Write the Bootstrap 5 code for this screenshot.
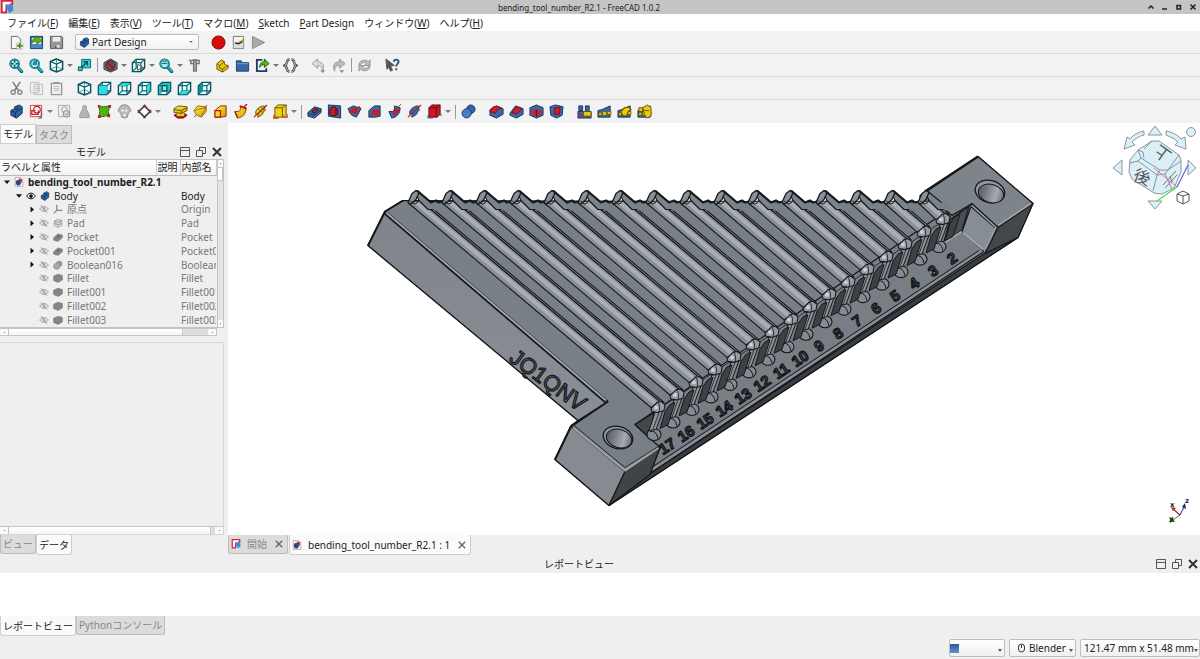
<!DOCTYPE html>
<html lang="ja">
<head>
<meta charset="utf-8">
<meta name="viewport" content="width=device-width, initial-scale=1">
<title>bending_tool_number_R2.1 - FreeCAD 1.0.2</title>
<link href="https://cdn.jsdelivr.net/npm/bootstrap@5.3.0/dist/css/bootstrap.min.css" rel="stylesheet">
<style>
body{font-family:"Noto Sans","Noto Sans CJK JP",sans-serif;font-size:10px;line-height:14px;color:#222;background:#efefef}
button,select{font:inherit;color:inherit;padding:0;border:0;background:none}
.titlebar{background:#c5c5c5;height:14px;font-size:8px;line-height:13px}
.titlebar .brand{width:14px;height:14px}
.wctl{width:14px;height:14px;line-height:0}
.menubar{background:#fff;height:17px;padding-left:7px}
.menubar a{color:#222;text-decoration:none;line-height:19px;margin-right:10px;white-space:nowrap}
.tools{height:23px;border-bottom:1px solid #dadada;background:#f2f2f2}
.tools.last{border:0}
.tb{width:20px;height:20px;display:flex;align-items:center;justify-content:center;flex:none}
.tb svg{width:15px;height:15px}
.tb.more{width:28px;justify-content:flex-start;padding-left:3px}
.tb.more::after,.drop::after{content:"";border:3px solid transparent;border-top-color:#777;border-bottom:0;margin-left:3px}
.grip{width:8px;height:16px;flex:none;background:radial-gradient(circle,#c4c4c4 30%,transparent 40%) 3px 0/2px 2px repeat-y,radial-gradient(circle,#c4c4c4 30%,transparent 40%) 5px 0/2px 2px repeat-y}
.grip.edge{width:6px}
.rule{width:6px;height:14px;flex:none;background:linear-gradient(#999,#999) 3px 0/1px 100% no-repeat}
.bench{width:124px;height:16px;border:1px solid #bbb;border-radius:2px;background:linear-gradient(#fff,#f1f1f1);margin:0 1px}
.bench svg{width:11px;height:11px;margin:0 2px 0 3px}
.pick{appearance:none;flex:1;height:14px;line-height:14px;outline:0}
.drop::after{margin:0 5px 0 0;border-width:2px;border-bottom:0}
.side{width:224px;margin-right:4px}
.sidetabs{padding-top:1px}
.tabbtn{border:1px solid #bcbcbc;background:#dcdcdc;color:#888;height:19px;padding:0 2px;white-space:nowrap}
.tabbtn.on{background:#fafafa;color:#222;height:20px;border-color:#cfcfcf}
.down .tabbtn{border-top:0;border-radius:0 0 3px 3px}
.panelhead{height:15px}
.panelhead svg,.reporthead svg{width:10px;height:10px;display:block}
.panelhead button,.reporthead button{width:10px;margin-left:6px}
.panelhead button:last-child,.reporthead button:last-child{margin-right:2px}
.treebox{height:169px;border:1px solid #c2c2c2;border-left:0}
.treebox table{table-layout:fixed;width:216px;height:167px;margin:0}
.treebox th{height:15px;font-weight:400;background:linear-gradient(#fff,#f2f2f2);border-right:1px solid #ccc;border-bottom:1px solid #bbb;padding:0 0 0 1px;line-height:13px;overflow:hidden;white-space:nowrap}
.treebox td{padding:0 0 0 1px;line-height:13px;overflow:hidden;white-space:nowrap;color:#777}
.treebox tbody{border:0}
.treebox td svg{width:10px;height:10px;vertical-align:-1px;margin-right:4px}
.treebox .tri{display:inline-block;width:10px;height:10px;vertical-align:-1px;margin-right:2px}
.tri.open{background:#111;clip-path:polygon(20% 35%,80% 35%,50% 70%)}
.tri.shut{background:#111;clip-path:polygon(35% 20%,70% 50%,35% 80%)}
.treebox .lv0{padding-left:2px}.treebox .lv1{padding-left:14px}.treebox .lv2{padding-left:27px}
.treebox .live td{color:#222}
.vbar{width:8px;background:#e4e4e4;border-left:1px solid #c5c5c5}
.hbar{height:8px;background:#dedede;border:1px solid #c5c5c5;border-left:0;width:217px}
.cap{background:#fafafa;flex:none;display:flex;align-items:center;justify-content:center}
.cap::before{content:"";width:1px;height:1px;background:#777}
.vbar .cap{height:7px}.hbar .cap{width:8px}
.vbar .grab{height:14px;background:#fff;border:1px solid #c5c5c5;border-left:0}
.hbar .grab{background:linear-gradient(#fff,#f5f5f5);border:solid #c5c5c5;border-width:0 1px}
.hbar .long{width:81%}
.props{border:1px solid #d6d6d6;border-left:0;margin-top:6px}
.props .hbar{width:auto;border-right:0;border-bottom:0}
.stage{background:#fff}
.stage>svg.part{position:absolute;inset:0;width:100%;height:100%}
.navcube{position:absolute;top:0;right:0;width:90px;height:92px}
.triad{position:absolute;right:8px;bottom:10px;width:26px;height:28px}
.doctabs{gap:1px}
.doctabs svg{width:10px;height:10px}
.doctabs .tabbtn{padding:0 4px 0 2px}
.doctabs .tabbtn span{margin:0 8px 0 6px}
.doctabs .cross{width:8px;height:8px}
.reporthead{height:18px}
.report{height:43px;background:#fff}
.status{height:22px}
.status .box{height:18px;border:1px solid #bdbdbd;border-radius:2px;background:linear-gradient(#fff,#f0f0f0);display:flex;align-items:center;white-space:nowrap;flex:none}
.status .box::after{content:"";border:2px solid transparent;border-top:3px solid #555;border-bottom:0;margin:4px 2px 0 auto}
.w1{width:56px}.w2{width:67px}.w3{width:120px}
.status .w3{padding-left:3px}
.swatch{width:9px;height:9px;background:linear-gradient(#2f5b96,#5f90c8)}
.report-tabs{height:21px}
</style>
</head>
<body class="d-flex flex-column min-vh-100 overflow-hidden">

<svg width="0" height="0" class="position-absolute" aria-hidden="true">
<defs>
<linearGradient id="yl" x2="1" y2="1"><stop stop-color="#fff04a"/><stop offset="1" stop-color="#c9a100"/></linearGradient>
<symbol id="fc" viewBox="0 0 16 16"><path d="M2 1h12v4H7v9H2z" fill="#fff" stroke="#d8232f" stroke-width="2"/><path d="M7 6h3l1-1 1 1 2-1v3l1 1-1 2 1 1-2 1-1-1v2h-2v-3H8z" fill="#3e87e0" stroke="#3e87e0"/><path d="M5 4h6M5 4v8" stroke="#fff" stroke-width="2"/></symbol>
<symbol id="doc" viewBox="0 0 16 16"><path d="M2 1h9l3 3v11H2z" fill="#fff" stroke="#888"/><ellipse cx="7" cy="9" rx="4" ry="4.500" fill="#1d4a8c"/><path d="M8 2l5 2-1 6-4-3z" fill="#bb2530"/></symbol>
<symbol id="new" viewBox="0 0 16 16"><path d="M2.500 1.500h7l3 3v10h-10z" fill="#f8f8f8" stroke="#666"/><circle cx="11.500" cy="11.500" r="4" fill="#fff" stroke="#999" stroke-width=".6"/><path d="M11.500 8.500v6M8.500 11.500h6" stroke="#518a16" stroke-width="2"/></symbol>
<symbol id="open" viewBox="0 0 16 16"><path d="M1.500 1.500h13v13h-13z" fill="#3465a4" stroke="#1c3d6b"/><path d="M3 3h10v7H3z" fill="#eee"/><path d="M2 10h12v4H2z" fill="#4d86c6"/><path d="M3 9c0-5 3-6 5-6V1l6 5-6 4V7C6 7 4 7 3 9z" fill="#5cb312" stroke="#2d6d0a" stroke-width=".7"/></symbol>
<symbol id="save" viewBox="0 0 16 16"><path d="M1.500 1.500h12l1 1v12h-13z" fill="#999" stroke="#555"/><path d="M4 2h8v5H4z" fill="#eee"/><path d="M5 10h7v4H5z" fill="#ddd" stroke="#666" stroke-width=".6"/><path d="M6 11h2v3H6z" fill="#555"/></symbol>
<symbol id="rec" viewBox="0 0 16 16"><circle cx="8" cy="8" r="7" fill="#d40c0c" stroke="#900"/></symbol>
<symbol id="macro" viewBox="0 0 16 16"><path d="M2.500 1.500h11v13h-11z" fill="#f4f4f4" stroke="#777"/><path d="M3 8h10v6H3z" fill="#ddd"/><path d="M4 9c2-3 2 1 4-1l5-3-1 3-4 2z" fill="#222"/><path d="M8 8l5-3" stroke="#e5b800" stroke-width="1.500"/></symbol>
<symbol id="play" viewBox="0 0 16 16"><path d="M1.500 1.500v13l13-6.500z" fill="#aaa" stroke="#888"/></symbol>
<symbol id="lens" viewBox="0 0 16 16"><path d="M8.500 9l5 5.500" stroke="#075b66" stroke-width="3.400" stroke-linecap="round"/><path d="M9 9l4.500 5" stroke="#23c4cf" stroke-width="1.600" stroke-linecap="round"/><circle cx="6" cy="6" r="4.600" fill="#b9eef0" stroke="#075b66" stroke-width="2"/><circle cx="6" cy="6" r="4.600" fill="none" stroke="#1bb5be"/></symbol>
<symbol id="fit" viewBox="0 0 16 16"><use href="#lens"/><path d="M6 2v8M2 6h8" stroke="#075b66" stroke-width="1.600"/><path d="M5 5h2v2H5z" fill="#fff"/></symbol>
<symbol id="sel" viewBox="0 0 16 16"><use href="#lens"/><path d="M4 7l1-3 3-1v4z" fill="#149da5" stroke="#075b66" stroke-width=".7"/></symbol>
<symbol id="zoomto" viewBox="0 0 16 16"><use href="#lens"/><path d="M3 6h6M4 4h4" stroke="#075b66"/></symbol>
<symbol id="iso" viewBox="0 0 16 16"><path d="M8 1l6.500 2.800v8.500L8 15l-6.500-2.700V3.800z" fill="#fff" stroke="#0a515b" stroke-width="1.600"/><path d="M2 4l6 2.500L14 4M8 6.500v8" fill="none" stroke="#0a515b" stroke-width="1.400"/><path d="M2 12l6-3 6 3M8 1.500v4" fill="none" stroke="#17a5ae"/></symbol>
<symbol id="wire" viewBox="0 0 16 16"><path d="M1.500 5l4-3.500h9v9l-4 4h-9z" fill="#e9ffff" stroke="#0a515b" stroke-width="1.500"/><path d="M1.500 5h9v9.500M10.500 5l4-3.500M5.500 1.500v9h9M5.500 10.500l-4 4" fill="none" stroke="#0a6871" stroke-width="1.300"/></symbol>
<symbol id="front" viewBox="0 0 16 16"><use href="#wire"/><path d="M2 5h8.500v9H2z" fill="#2bdde5"/></symbol>
<symbol id="topv" viewBox="0 0 16 16"><use href="#wire"/><path d="M2 5l4-3h8l-4 3z" fill="#2bdde5"/></symbol>
<symbol id="right" viewBox="0 0 16 16"><use href="#wire"/><path d="M11 5l3-3v8l-3 4z" fill="#2bdde5"/></symbol>
<symbol id="rear" viewBox="0 0 16 16"><use href="#wire"/><path d="M5.500 5h5v5.500h-5z" fill="#8fe3e6"/><path d="M2 5h3v8l-3 1zM6 2h8l-3 3H6zM11 5l3-3v8h-3z" fill="#22c3cb"/><path d="M5.500 5h5v5.500h-5z" fill="none" stroke="#0a515b" stroke-width="1.300"/></symbol>
<symbol id="bottom" viewBox="0 0 16 16"><use href="#wire"/><path d="M2 14l4-4h8l-4 4z" fill="#2bdde5"/></symbol>
<symbol id="leftv" viewBox="0 0 16 16"><use href="#wire"/><path d="M2 5l4-3v8l-4 4z" fill="#139099"/></symbol>
<symbol id="linkgo" viewBox="0 0 16 16"><path d="M5 1.500h9.500v9H5z" fill="#32cfd7" stroke="#0a6871"/><path d="M1.500 9.500h4v4h-4z" fill="#32cfd7" stroke="#0a515b"/><path d="M5 10l6-6M7 4h4v4" stroke="#0a515b" stroke-width="1.500" fill="none"/></symbol>
<symbol id="style" viewBox="0 0 16 16"><path d="M8 1l7 4v7l-7 3-7-3V5z" fill="#55868b" stroke="#0c5058"/><circle cx="8" cy="8" r="4.700" fill="#555" stroke="#a31217" stroke-width="1.600"/><path d="M5 5l6 6" stroke="#a31217" stroke-width="1.700"/></symbol>
<symbol id="clip" viewBox="0 0 16 16"><use href="#wire"/><path d="M7 7l5 2-2 1 1 3-2-1-2 1z" fill="#fff" stroke="#444"/></symbol>
<symbol id="caliper" viewBox="0 0 16 16"><path d="M2 2.500h12M7 1v13h3V1M4 3v3h3M10 6h3V3" stroke="#777" stroke-width="1.400" fill="#aaa"/></symbol>
<symbol id="part" viewBox="0 0 16 16"><path d="M2 6l5-4 3 2v3l4 1v3l-6 4-6-3z" fill="#eac90c" stroke="#6d5800"/><path d="M2 6l3 2v3l3 1 6-4M8 12v3M5 8l5-4" fill="none" stroke="#6d5800"/></symbol>
<symbol id="folder" viewBox="0 0 16 16"><path d="M1.500 3h5l1 2h7v9h-13z" fill="#3568a8" stroke="#1d3e69"/><path d="M2 6h12" stroke="#72a0d3"/></symbol>
<symbol id="share" viewBox="0 0 16 16"><path d="M8 2H2v12h10v-3" fill="none" stroke="#1d3e69" stroke-width="2"/><path d="M5 10c0-5 3-6 5-6V1l5 5-5 4V7C8 7 6 8 5 10z" fill="#59b80d" stroke="#23610a"/></symbol>
<symbol id="braces" viewBox="0 0 16 16"><path d="M7 1.500C2.500 1.500 5.500 7 2 8c3.500 1 .5 6.500 5 6.500M9 1.500c4.500 0 1.500 5.500 5 6.500-3.500 1-.5 6.500-5 6.500" fill="none" stroke="#444" stroke-width="2.600"/><path d="M7 1.500C2.500 1.500 5.500 7 2 8c3.500 1 .5 6.500 5 6.500M9 1.500c4.500 0 1.500 5.500 5 6.500-3.500 1-.5 6.500-5 6.500" fill="none" stroke="#ddd" stroke-width=".8"/></symbol>
<symbol id="undo" viewBox="0 0 16 16"><path d="M1 6l6-5v3c6 0 8 5 5 10 0-4-1-6-5-6v3z" fill="#ddd" stroke="#999"/><path d="M10 13h5l-2.500 3z" fill="#888"/></symbol>
<symbol id="redo" viewBox="0 0 16 16"><path d="M15 6L9 1v3C3 4 1 9 4 14c0-4 1-6 5-6v3z" fill="#bbb" stroke="#999"/><path d="M9 13h5l-2.500 3z" fill="#888"/></symbol>
<symbol id="refresh" viewBox="0 0 16 16"><path d="M2 7c1-5 7-6 10-3l2-2v6H8l2-2C8 4 5 5 4 7zM14 9c-1 5-7 6-10 3l-2 2V8h6l-2 2c2 2 5 1 6-1z" fill="#bbb" stroke="#888" stroke-width=".8"/></symbol>
<symbol id="what" viewBox="0 0 16 16"><path d="M1 1l9 7-4 .5L8 13l-2 1-2-4-2 2z" fill="#555" stroke="#555"/><path d="M9.500 4c0-3 5-3 5 0 0 2-2.500 2-2.500 5M12 11v2" fill="none" stroke="#2c4d7c" stroke-width="2"/></symbol>
<symbol id="cut" viewBox="0 0 16 16"><path d="M4 1l6 9M12 1L6 10" stroke="#777" stroke-width="1.500"/><circle cx="4.500" cy="12" r="2.200" fill="none" stroke="#888" stroke-width="1.500"/><circle cx="11.500" cy="12" r="2.200" fill="none" stroke="#888" stroke-width="1.500"/></symbol>
<symbol id="copy" viewBox="0 0 16 16"><path d="M1.500 1.500h9v11h-9zM5.500 3.500h9v11h-9z" fill="#f1f1f1" stroke="#bbb"/><path d="M7 6h5M7 8h5M7 10h5" stroke="#bbb"/></symbol>
<symbol id="paste" viewBox="0 0 16 16"><path d="M2.500 2.500h11v12h-11z" fill="#eee" stroke="#999" stroke-width="1.400"/><path d="M5 1h6v2H5z" fill="#999"/><path d="M5 6h6M5 8h6M5 10h6" stroke="#bbb"/></symbol>
<symbol id="body" viewBox="0 0 16 16"><path d="M2 7l4-2V3l5-2 3 2v7l-6 5-6-3z" fill="#2d62a3" stroke="#132f52"/><path d="M2 7l5 2 7-5M7 9v6M6 5l3 1V3" fill="none" stroke="#132f52"/></symbol>
<symbol id="sketch" viewBox="0 0 16 16"><path d="M1.500 1.500h12v12h-12z" fill="#fff" stroke="#c9373c"/><circle cx="8.500" cy="6" r="3.500" fill="none" stroke="#cc1f26" stroke-width="1.300"/><path d="M3 6v5h7v-4M3 7h4" fill="none" stroke="#cc1f26" stroke-width="1.300"/><path d="M13 9v6h-3" stroke="#444" fill="none"/></symbol>
<symbol id="gsketch" viewBox="0 0 16 16"><path d="M1.500 1.500h12v12h-12z" fill="#eee" stroke="#aaa"/><circle cx="8" cy="6" r="3" fill="none" stroke="#999"/><circle cx="10" cy="10.500" r="3.500" fill="#ddd" stroke="#888"/><path d="M8 10l2 2 3-4" fill="none" stroke="#888"/></symbol>
<symbol id="weight" viewBox="0 0 16 16"><path d="M8 1.500c3 0 2 3 2 4l3 6v3H3v-3l3-6c0-1-1-4 2-4z" fill="#b4b4b4" stroke="#999"/></symbol>
<symbol id="binder" viewBox="0 0 16 16"><path d="M2 2l5 1 7-1-2 6 1 4-5 1-6 1 1-6z" fill="#47b512" stroke="#287105"/><path d="M12 1h3v3h-3zM1 12h3v3H1zM11 11h3v3h-3zM1 1h2v3H1z" fill="#bd1d20"/></symbol>
<symbol id="clone" viewBox="0 0 16 16"><path d="M4 2c2-1.500 6-1.500 8 0l3 5-2 2-1 1-1 4-3 1-3-1-1-4-1-1-2-2z" fill="#bbb" stroke="#888"/><path d="M5 7h2M9 7h2M7 12h2" stroke="#fff" stroke-width="2"/></symbol>
<symbol id="datum" viewBox="0 0 16 16"><path d="M8 2l6 6-6 6-6-6z" fill="#fff" stroke="#1c3f70" stroke-width="1.700"/><path d="M8 .5l1.500 1.500L8 3.500 6.500 2zM1 6.500h2v3H1zM13 6.500h2v3h-2zM7 13h2v2H7z" fill="#a82024" stroke="#a82024" stroke-width=".5"/></symbol>
<symbol id="pad" viewBox="0 0 16 16"><path d="M1 12l4-2h7l3 2-4 3H5z" fill="#a51515" stroke="#701"/><path d="M4 8h8v5H4z" fill="#e8c71c"/><path d="M1 5l5-3 9 1v4l-6 3-8-1z" fill="url(#yl)" stroke="#665300"/><path d="M1 6l8 1 6-3M9 7v3" fill="none" stroke="#665300"/></symbol>
<symbol id="rev" viewBox="0 0 16 16"><path d="M1 7l4-5 9 1v5l-5 6-5-2z" fill="url(#yl)" stroke="#8c7200"/><path d="M1 8c4-3 9-4 13-3M9 14c0-3 2-6 5-8" fill="none" stroke="#a57a00"/><path d="M1 14l3-3M12 5l3-4" stroke="#c22"/></symbol>
<symbol id="loft" viewBox="0 0 16 16"><path d="M3 6l5-4h6v11l-5 1H3z" fill="url(#yl)" stroke="#8a2200"/><path d="M2 7h6v7H2z" fill="#ffda1a" stroke="#b81919" stroke-width="1.400"/></symbol>
<symbol id="sweep" viewBox="0 0 16 16"><path d="M2 8h4c2-1 2-3 2-6l6 2c0 6-3 10-9 11z" fill="url(#yl)" stroke="#a72e00"/><path d="M7 2l7 3M2 8l3 7M12 3l3-3" stroke="#b81919" stroke-width="1.600"/></symbol>
<symbol id="helix" viewBox="0 0 16 16"><path d="M3 8c1-3 5-6 9-6l1 5c-3 0-1 3-4 5l-4 2 1-4-3 1z" fill="url(#yl)" stroke="#665300"/><path d="M5 5l5 4M8 3l4 4" stroke="#665300"/><path d="M1 14L15 1" stroke="#c61c1c" stroke-width="1.300"/></symbol>
<symbol id="prim" viewBox="0 0 16 16"><path d="M2 4l3-3h9v10l-3 3H2z" fill="#efd21a" stroke="#665300"/><path d="M2 4h8v10M10 4l4-3" fill="none" stroke="#665300"/><path d="M1 12v3h5M11 14h4v-3" stroke="#ba2b00" stroke-width="1.300" fill="none"/></symbol>
<symbol id="pocket" viewBox="0 0 16 16"><path d="M1 9l7-6 7 2v4l-7 6-7-2z" fill="#3768ab" stroke="#16345d"/><path d="M5 8l4-3 3 1-4 4z" fill="#c31c24" stroke="#301018"/><path d="M1 10l7 2 7-6" fill="none" stroke="#16345d"/></symbol>
<symbol id="hole" viewBox="0 0 16 16"><path d="M1.500 1l13 1v13l-13-2z" fill="#3768ab" stroke="#16345d"/><ellipse cx="7" cy="8" rx="4" ry="5" fill="#c31c24" stroke="#301018"/><path d="M8 5h4v7H9z" fill="#8a1018"/></symbol>
<symbol id="groove" viewBox="0 0 16 16"><path d="M1 5l6-3 8 3-5 9-5-2z" fill="#3768ab" stroke="#16345d"/><path d="M4 6l5-2 3 4-3 3-4-2z" fill="#c31c24"/><path d="M2 9L14 3" stroke="#c31c24" stroke-width="2"/></symbol>
<symbol id="sloft" viewBox="0 0 16 16"><path d="M2 7l6-5h6v11l-5 1H2z" fill="#3768ab" stroke="#16345d"/><path d="M6 6h7v6H4z" fill="#cf1820"/></symbol>
<symbol id="ssweep" viewBox="0 0 16 16"><path d="M2 8h4c2-1 2-3 2-6l6 2c0 6-3 10-9 11z" fill="#3768ab" stroke="#16345d"/><path d="M6 8l4-3 3 2-5 5zM12 3l3-3" fill="#cf1820" stroke="#c31c24"/></symbol>
<symbol id="shelix" viewBox="0 0 16 16"><path d="M3 8c1-3 5-6 9-6l1 5c-3 0-1 3-4 5l-4 2 1-4-3 1z" fill="#3768ab" stroke="#16345d"/><path d="M1 14L15 1" stroke="#c61c1c" stroke-width="1.300"/></symbol>
<symbol id="sprim" viewBox="0 0 16 16"><path d="M2 4l3-3h9v10l-3 3H2z" fill="#cf1820" stroke="#591016"/><path d="M2 4h8v10M10 4l4-3" fill="none" stroke="#591016"/><path d="M1 12v3h5M13 11h2v2" stroke="#2c5994" fill="none"/></symbol>
<symbol id="bool" viewBox="0 0 16 16"><circle cx="10.500" cy="5.500" r="4.500" fill="#2e62a6" stroke="#1b406f"/><circle cx="6" cy="10" r="4.900" fill="#4680c0" stroke="#1b406f"/></symbol>
<symbol id="fillet" viewBox="0 0 16 16"><path d="M1 6l7-4 7 3v6l-7 4-7-3z" fill="#3768ab" stroke="#16345d"/><path d="M1 8c2-6 7-6 9-5l4 2c-4 0-6 1-7 5z" fill="#d31d25" stroke="#7a1016"/></symbol>
<symbol id="chamfer" viewBox="0 0 16 16"><path d="M1 10l6-8 8 3v6l-7 4-7-3z" fill="#3768ab" stroke="#16345d"/><path d="M3 9l5-6 6 2-6 6z" fill="#d31d25" stroke="#7a1016"/></symbol>
<symbol id="draft" viewBox="0 0 16 16"><path d="M1 4l7-3 7 3v8l-7 3-7-3z" fill="#3768ab" stroke="#16345d"/><path d="M3 6h10v6l-5 1-5-1z" fill="#d31d25"/><path d="M8 6v8" stroke="#16345d" stroke-width="1.500"/></symbol>
<symbol id="thick" viewBox="0 0 16 16"><path d="M1 3l6-2 8 2-1 9-6 3-6-3z" fill="#3768ab" stroke="#16345d"/><path d="M6 4h6l-1 7H6z" fill="#d31d25" stroke="#7a1016"/></symbol>
<symbol id="pat" viewBox="0 0 16 16"><path d="M1 7l4-1 9-4v12H1z" fill="#3768ab" stroke="#16345d"/><path d="M2 9h3v3H2zM6 8h4v4H6zM11 8h4v3h-4z" fill="#e8ca13" stroke="#665300" stroke-width=".7"/></symbol>
<symbol id="mirror" viewBox="0 0 16 16"><path d="M1 8h14v7H1zM9 2h4v6H9z" fill="#3768ab" stroke="#16345d"/><path d="M2 2h4v5H2z" fill="#3768ab" stroke="#16345d"/><path d="M7 8h8v5H7z" fill="#e8ca13" stroke="#665300"/><path d="M2 10l4 4" stroke="#c31c24" stroke-width="2"/></symbol>
<symbol id="polar" viewBox="0 0 16 16"><use href="#pat"/><path d="M4 8l4-4 4-1 3 3-3 2-2 5-4-1z" fill="#e8ca13" stroke="#665300" stroke-width="1.200"/></symbol>
<symbol id="multi" viewBox="0 0 16 16"><use href="#pat"/><path d="M6 4l5-3 4 3v9l-5 2-2-4z" fill="#e8ca13" stroke="#665300"/><path d="M2 4h4v4H2zM8 7h5" fill="#e8ca13" stroke="#665300"/></symbol>
<symbol id="gsolid" viewBox="0 0 16 16"><path d="M1 5l7-3 7 2v7l-7 4-7-3z" fill="#858585" stroke="#777"/></symbol>
<symbol id="gpocket" viewBox="0 0 16 16"><path d="M1 9l7-6 7 2v4l-7 6-7-2z" fill="#858585" stroke="#777"/><path d="M5 8l4-3 3 1-4 3z" fill="#666"/></symbol>
<symbol id="gpad" viewBox="0 0 16 16"><path d="M2 5l5-3 7 2v8l-6 3-6-3z" fill="#ddd" stroke="#888"/><path d="M2 8l6 3 6-3M2 5l6 2 6-3" fill="none" stroke="#888" stroke-width="1.300"/></symbol>
<symbol id="gbool" viewBox="0 0 16 16"><circle cx="10" cy="6" r="5" fill="#999"/><circle cx="6" cy="10" r="5" fill="#aaa" stroke="#888"/></symbol>
<symbol id="axes" viewBox="0 0 16 16"><path d="M6 1v9h9M6 10l-5 5" fill="none" stroke="#888" stroke-width="2"/></symbol>
<symbol id="eye" viewBox="0 0 16 16"><path d="M1 8c4-6 10-6 14 0-4 6-10 6-14 0z" fill="#fff" stroke="#111" stroke-width="1.600"/><circle cx="8" cy="8" r="3" fill="#111"/></symbol>
<symbol id="noeye" viewBox="0 0 16 16"><path d="M1 8c4-5 10-5 14 0-4 5-10 5-14 0z" fill="none" stroke="#999" stroke-width="1.500"/><circle cx="8" cy="8" r="2" fill="none" stroke="#999" stroke-width="1.300"/><path d="M3 2l10 12" stroke="#999" stroke-width="1.500"/></symbol>
<symbol id="dock" viewBox="0 0 10 10"><path d="M.5.500h9v9h-9zM.5 3.500h9" fill="none" stroke="#555"/></symbol>
<symbol id="float" viewBox="0 0 10 10"><path d="M3.500 3.500v-3h6v6h-3M.5 3.500h6v6h-6z" fill="none" stroke="#555"/></symbol>
<symbol id="close" viewBox="0 0 10 10"><path d="M1 1l8 8M9 1L1 9" stroke="#333" stroke-width="2"/></symbol>
<symbol id="xs" viewBox="0 0 10 10"><path d="M1 1l8 8M9 1L1 9" stroke="#666" stroke-width="1.700"/></symbol>
</defs></svg>

<header class="titlebar d-flex align-items-center">
  <svg class="brand"><use href="#fc"/></svg>
  <span class="flex-fill text-center">bending_tool_number_R2.1 - FreeCAD 1.0.2</span>
  <button class="wctl" aria-label="シェード"><svg width="8" height="8"><path d="M1.500 5.500L4 3l2.500 2.500" fill="none" stroke="#222" stroke-width="1.500"/></svg></button>
  <button class="wctl" aria-label="最小化"><svg width="8" height="8"><path d="M1 6h5" stroke="#222" stroke-width="1.500"/></svg></button>
  <button class="wctl" aria-label="最大化"><svg width="8" height="8"><path d="M2 2.500h3.500V6H2z" fill="none" stroke="#222" stroke-width="1.500"/></svg></button>
  <button class="wctl" aria-label="閉じる"><svg width="8" height="8"><path d="M1.500 1.500l5 5M6.500 1.500l-5 5" stroke="#222" stroke-width="1.500"/></svg></button>
</header>

<nav class="menubar d-flex">
  <a href="#">ファイル(<u>F</u>)</a><a href="#">編集(<u>E</u>)</a><a href="#">表示(<u>V</u>)</a><a href="#">ツール(<u>T</u>)</a><a href="#">マクロ(<u>M</u>)</a><a href="#"><u>S</u>ketch</a><a href="#"><u>P</u>art Design</a><a href="#">ウィンドウ(<u>W</u>)</a><a href="#">ヘルプ(<u>H</u>)</a>
</nav>

<div class="tools d-flex align-items-center">
  <span class="grip edge"></span>
  <button class="tb" aria-label="新規"><svg><use href="#new"/></svg></button>
  <button class="tb" aria-label="開く"><svg><use href="#open"/></svg></button>
  <button class="tb" aria-label="保存"><svg><use href="#save"/></svg></button>
  <span class="grip"></span>
  <div class="bench drop d-flex align-items-center"><svg><use href="#body"/></svg><select class="pick" aria-label="ワークベンチ"><option>Part Design</option></select></div>
  <span class="grip"></span>
  <button class="tb" aria-label="記録"><svg><use href="#rec"/></svg></button>
  <button class="tb" aria-label="マクロ"><svg><use href="#macro"/></svg></button>
  <button class="tb" aria-label="実行"><svg><use href="#play"/></svg></button>
</div>
<div class="tools d-flex align-items-center">
  <span class="grip edge"></span>
  <button class="tb" aria-label="全て表示"><svg><use href="#fit"/></svg></button>
  <button class="tb" aria-label="選択範囲に合わせる"><svg><use href="#sel"/></svg></button>
  <button class="tb more" aria-label="等角図"><svg><use href="#iso"/></svg></button>
  <button class="tb" aria-label="リンク先"><svg><use href="#linkgo"/></svg></button>
  <span class="rule"></span>
  <button class="tb more" aria-label="描画スタイル"><svg><use href="#style"/></svg></button>
  <button class="tb more" aria-label="選択"><svg><use href="#clip"/></svg></button>
  <button class="tb more" aria-label="ズーム"><svg><use href="#zoomto"/></svg></button>
  <button class="tb" aria-label="計測"><svg><use href="#caliper"/></svg></button>
  <span class="grip"></span>
  <button class="tb" aria-label="パーツ"><svg><use href="#part"/></svg></button>
  <button class="tb" aria-label="グループ"><svg><use href="#folder"/></svg></button>
  <button class="tb more" aria-label="リンク作成"><svg><use href="#share"/></svg></button>
  <button class="tb" aria-label="変数セット"><svg><use href="#braces"/></svg></button>
  <span class="grip"></span>
  <button class="tb" aria-label="元に戻す"><svg><use href="#undo"/></svg></button>
  <button class="tb" aria-label="やり直す"><svg><use href="#redo"/></svg></button>
  <span class="rule"></span>
  <button class="tb" aria-label="更新"><svg><use href="#refresh"/></svg></button>
  <span class="grip"></span>
  <button class="tb" aria-label="これは何"><svg><use href="#what"/></svg></button>
</div>
<div class="tools d-flex align-items-center">
  <span class="grip edge"></span>
  <button class="tb" aria-label="切り取り"><svg><use href="#cut"/></svg></button>
  <button class="tb" aria-label="コピー"><svg><use href="#copy"/></svg></button>
  <button class="tb" aria-label="貼り付け"><svg><use href="#paste"/></svg></button>
  <span class="grip"></span>
  <button class="tb" aria-label="等角"><svg><use href="#iso"/></svg></button>
  <button class="tb" aria-label="正面"><svg><use href="#front"/></svg></button>
  <button class="tb" aria-label="上面"><svg><use href="#topv"/></svg></button>
  <button class="tb" aria-label="右面"><svg><use href="#right"/></svg></button>
  <button class="tb" aria-label="背面"><svg><use href="#rear"/></svg></button>
  <button class="tb" aria-label="底面"><svg><use href="#bottom"/></svg></button>
  <button class="tb" aria-label="左面"><svg><use href="#leftv"/></svg></button>
</div>
<div class="tools last d-flex align-items-center">
  <span class="grip edge"></span>
  <button class="tb" aria-label="ボディー"><svg><use href="#body"/></svg></button>
  <button class="tb more" aria-label="スケッチ"><svg><use href="#sketch"/></svg></button>
  <button class="tb" aria-label="スケッチ検証"><svg><use href="#gsketch"/></svg></button>
  <button class="tb" aria-label="形状チェック"><svg><use href="#weight"/></svg></button>
  <button class="tb" aria-label="シェイプバインダー"><svg><use href="#binder"/></svg></button>
  <button class="tb" aria-label="クローン"><svg><use href="#clone"/></svg></button>
  <button class="tb more" aria-label="データム"><svg><use href="#datum"/></svg></button>
  <span class="grip"></span>
  <button class="tb" aria-label="パッド"><svg><use href="#pad"/></svg></button>
  <button class="tb" aria-label="レボリューション"><svg><use href="#rev"/></svg></button>
  <button class="tb" aria-label="加算ロフト"><svg><use href="#loft"/></svg></button>
  <button class="tb" aria-label="加算パイプ"><svg><use href="#sweep"/></svg></button>
  <button class="tb" aria-label="加算らせん"><svg><use href="#helix"/></svg></button>
  <button class="tb more" aria-label="加算プリミティブ"><svg><use href="#prim"/></svg></button>
  <span class="rule"></span>
  <button class="tb" aria-label="ポケット"><svg><use href="#pocket"/></svg></button>
  <button class="tb" aria-label="ホール"><svg><use href="#hole"/></svg></button>
  <button class="tb" aria-label="グルーブ"><svg><use href="#groove"/></svg></button>
  <button class="tb" aria-label="減算ロフト"><svg><use href="#sloft"/></svg></button>
  <button class="tb" aria-label="減算パイプ"><svg><use href="#ssweep"/></svg></button>
  <button class="tb" aria-label="減算らせん"><svg><use href="#shelix"/></svg></button>
  <button class="tb more" aria-label="減算プリミティブ"><svg><use href="#sprim"/></svg></button>
  <span class="rule"></span>
  <button class="tb" aria-label="ブーリアン"><svg><use href="#bool"/></svg></button>
  <span class="grip"></span>
  <button class="tb" aria-label="フィレット"><svg><use href="#fillet"/></svg></button>
  <button class="tb" aria-label="面取り"><svg><use href="#chamfer"/></svg></button>
  <button class="tb" aria-label="抜き勾配"><svg><use href="#draft"/></svg></button>
  <button class="tb" aria-label="厚み"><svg><use href="#thick"/></svg></button>
  <span class="grip"></span>
  <button class="tb" aria-label="鏡像"><svg><use href="#mirror"/></svg></button>
  <button class="tb" aria-label="直線パターン"><svg><use href="#pat"/></svg></button>
  <button class="tb" aria-label="円状パターン"><svg><use href="#polar"/></svg></button>
  <button class="tb" aria-label="マルチ変換"><svg><use href="#multi"/></svg></button>
</div>

<main class="d-flex flex-fill">
  <aside class="side d-flex flex-column flex-shrink-0">
    <div class="sidetabs d-flex align-items-end"><button class="tabbtn on">モデル</button><button class="tabbtn">タスク</button></div>
    <div class="panelhead d-flex align-items-center"><span class="flex-fill text-center ps-2">モデル</span><button aria-label="重ねる"><svg><use href="#dock"/></svg></button><button aria-label="フロート"><svg><use href="#float"/></svg></button><button aria-label="閉じる"><svg><use href="#close"/></svg></button></div>
    <div class="treebox d-flex overflow-hidden">
      <table>
        <colgroup><col width="156"><col width="24"><col width="36"></colgroup>
        <thead><tr><th>ラベルと属性</th><th>説明</th><th>内部名</th></tr></thead>
        <tbody>
        <tr class="live"><td class="lv0" colspan="3"><span class="tri open"></span><svg><use href="#doc"/></svg><b>bending_tool_number_R2.1</b></td></tr>
        <tr class="live"><td class="lv1"><span class="tri open"></span><svg><use href="#eye"/></svg><svg><use href="#body"/></svg>Body</td><td></td><td>Body</td></tr>
        <tr><td class="lv2"><span class="tri shut"></span><svg><use href="#noeye"/></svg><svg><use href="#axes"/></svg>原点</td><td></td><td>Origin</td></tr>
        <tr><td class="lv2"><span class="tri shut"></span><svg><use href="#noeye"/></svg><svg><use href="#gpad"/></svg>Pad</td><td></td><td>Pad</td></tr>
        <tr><td class="lv2"><span class="tri shut"></span><svg><use href="#noeye"/></svg><svg><use href="#gpocket"/></svg>Pocket</td><td></td><td>Pocket</td></tr>
        <tr><td class="lv2"><span class="tri shut"></span><svg><use href="#noeye"/></svg><svg><use href="#gpocket"/></svg>Pocket001</td><td></td><td>Pocket001</td></tr>
        <tr><td class="lv2"><span class="tri shut"></span><svg><use href="#noeye"/></svg><svg><use href="#gbool"/></svg>Boolean016</td><td></td><td>Boolean016</td></tr>
        <tr><td class="lv2"><span class="tri"></span><svg><use href="#noeye"/></svg><svg><use href="#gsolid"/></svg>Fillet</td><td></td><td>Fillet</td></tr>
        <tr><td class="lv2"><span class="tri"></span><svg><use href="#noeye"/></svg><svg><use href="#gsolid"/></svg>Fillet001</td><td></td><td>Fillet001</td></tr>
        <tr><td class="lv2"><span class="tri"></span><svg><use href="#noeye"/></svg><svg><use href="#gsolid"/></svg>Fillet002</td><td></td><td>Fillet002</td></tr>
        <tr><td class="lv2"><span class="tri"></span><svg><use href="#noeye"/></svg><svg><use href="#gsolid"/></svg>Fillet003</td><td></td><td>Fillet003</td></tr>
        </tbody>
      </table>
      <div class="vbar d-flex flex-column"><span class="cap"></span><span class="grab"></span><span class="cap mt-auto"></span></div>
    </div>
    <div class="hbar d-flex"><span class="cap"></span><span class="grab long me-auto"></span><span class="cap"></span></div>
    <div class="props flex-fill d-flex flex-column justify-content-end"><div class="hbar d-flex"><span class="cap"></span><span class="grab flex-fill me-1"></span><span class="cap"></span></div></div>
    <div class="down d-flex align-items-start"><button class="tabbtn">ビュー</button><button class="tabbtn on">データ</button></div>
  </aside>

  <section class="d-flex flex-column flex-fill">
    <div class="stage flex-fill position-relative overflow-hidden">
      <svg class="part" viewBox="228 123 972 411" role="img" aria-label="曲げ治具の3Dモデル">
        <defs>
          <linearGradient id="bore"><stop stop-color="#555a60"/><stop offset=".7" stop-color="#a6abb3"/><stop offset="1" stop-color="#6c7177"/></linearGradient>
          <linearGradient id="front-face" x2="0" y2="1"><stop stop-color="#7f858a"/><stop offset="1" stop-color="#8a8e96"/></linearGradient>
        </defs>
        <g stroke="#14171b" stroke-linejoin="round" stroke-width="1.200">
          <path d="M385 211L403 200 920 202V195L978 156 1033 203 1018 237 609 505 555 459 571 425 578 420 368 245z" fill="#787f85"/>
          <path d="M385 211L368 245 578 420 608 401z" fill="url(#front-face)"/>
          <path d="M385 212L606 401" stroke="#14171b" stroke-width="4"/><path d="M386 212L606 400" stroke="#a4a9af" stroke-width="1.800"/>
          <path d="M608 401L571 426" stroke-width="2"/><path d="M385 211L368 245" stroke-width="2"/>
          <path d="M385 211L403 200" stroke-width="2"/>
          <path d="M635 424L660 447 650 473 990 247 997 226 972 204 940 215z" fill="#787e83"/>
          <path d="M650 473L986 252 1018 237 609 505z" fill="#3b3e41"/>
          <path d="M651 470L985 248" stroke="#8b9197" stroke-width="1.800"/><path d="M653 466L979 250" stroke-width="1"/>
          <path d="M635 424L654 412 650 438z" fill="#44484b"/>
          <path d="M950 219L969 206 962 230 944 241z" fill="#4b4f52"/>
          <path d="M971 206L996 228 984 251 962 231z" fill="#878d94"/>
          <path d="M962 231L943 243" stroke="#a0a6ad" stroke-width="2"/><path d="M963 232L983 249" stroke="#a0a6ad" stroke-width="2"/>
          <path d="M978 156L1033 203 997 226 972 203 952 215 925 192z" fill="#7d848a"/>
          <path d="M1033 203L998 227 985 253 1018 237z" fill="#44484b"/>
          <path d="M972 205L996 227 984 251M1031 203L998 225" fill="none" stroke="#a0a6ad" stroke-width="1.600"/>
          <path d="M978 156L925 191" stroke-width="2.400"/>
          <path d="M571 426L625 471 609 505 555 459z" fill="#868b91"/>
          <path d="M625 471L660 447 650 474 609 505z" fill="#404447"/>
          <path d="M573 427L625 470 659 447" fill="none" stroke="#9da3aa" stroke-width="2.200"/><path d="M574 425L625 467 660 445" fill="none" stroke-width=".8"/>
          <path d="M571 426L555 459" stroke-width="2"/>
        </g>
        <g id="ridges" stroke="#16191d" stroke-linejoin="round"></g>
        <g fill="url(#bore)" stroke="#14171b" stroke-width="1.300">
          <ellipse cx="618" cy="437" rx="15" ry="11" fill="#9298a0" transform="rotate(16 618 437)"/><ellipse cx="619" cy="438" rx="13" ry="9" stroke-width="1" transform="rotate(16 619 438)"/>
          <ellipse cx="990" cy="191" rx="15" ry="11" fill="#9298a0" transform="rotate(16 990 191)"/><ellipse cx="991" cy="193" rx="13" ry="9" stroke-width="1" transform="rotate(16 991 193)"/>
        </g>
        <g id="sizes" font-family="Liberation Sans, sans-serif" font-size="15" font-weight="700" text-anchor="middle" fill="#4a4f54" stroke="#101316" stroke-width="1.200"></g>
        <text transform="translate(508 360) rotate(36)" font-family="Liberation Sans, sans-serif" font-size="22" fill="#656b71" stroke="#14171b" stroke-width="1.200">JQ1QNV</text>
      </svg>

      <svg class="navcube" viewBox="1110 123 90 92" role="img" aria-label="ナビゲーションキューブ">
        <g fill="#dceff7" stroke="#7b8c94" stroke-width=".9" stroke-linejoin="round">
          <path d="M1148 135l7-9 7 9zM1148 201l7 8 7-8zM1122 160v15l-9-7zM1188 160v15l8-7z"/>
          <path d="M1144 131c-6 1-11 4-14 8l-3-2-3 12 11-4-3-3c3-3 7-6 12-7zM1166 131c6 1 12 4 15 8l4-2 1 12-11-4 3-3c-3-3-7-5-12-7z"/>
          <circle cx="1191" cy="132" r="4.500"/>
          <path d="M1138 150l14-9 7 0 20 14 2 5 0 12-7 16-12 6-8-1-22-14-3-7 1-12z"/>
          <path d="M1138 150l3 8 19 12 8 0 13-9M1141 158l-3 3-8 2M1138 161l19 14 3-5M1157 175l-4 16M1168 170l-3 4-8 1M1165 174l7 15M1168 170l11-15M1138 150l5 2 1 6M1152 141l-8 8" fill="none"/>
        </g>
        <text transform="translate(1166 149) rotate(-145)" text-anchor="middle" font-family="Noto Sans CJK JP,sans-serif" font-size="16" fill="#555">上</text>
        <text transform="translate(1140 183) rotate(20)" text-anchor="middle" font-family="Noto Sans CJK JP,sans-serif" font-size="17" fill="#555">後</text>
        <path d="M1163 185l13-14M1165 188l12-13M1170 176l2 6" stroke="#777"/>
        <path d="M1154 168l23 19" stroke="#e07c8b"/><path d="M1177 187l-20 14" stroke="#48e348" stroke-width="1.300"/><path d="M1177 187l11-22" stroke="#6264e0" stroke-width="1.300"/>
        <path d="M1177 194l6-3 6 3v7l-6 3-6-3zM1177 194l6 2 6-2M1183 196v8" fill="#fff" stroke="#555"/>
      </svg>
      <svg class="triad" viewBox="1166 496 26 28" role="img" aria-label="座標軸">
        <path d="M1180 514l-7-6" stroke="#a22" stroke-width="1.200"/><path d="M1171 506l5 1-3 3z" fill="#a22"/>
        <path d="M1180 514l4-8" stroke="#228"/><path d="M1185 502l1 6-4-2z" fill="#228"/>
        <path d="M1180 514l-7 5" stroke="#383"/><path d="M1169 521l3-5 3 5z" fill="#272"/>
        <g font-family="DejaVu Sans" font-size="7" font-weight="700" fill="#222"><text x="1170" y="506">x</text><text x="1185" y="502">z</text><text x="1169" y="520">y</text></g>
      </svg>
    </div>
    <div class="doctabs down d-flex align-items-start">
      <button class="tabbtn d-flex align-items-center"><svg><use href="#fc"/></svg><span>開始</span><svg class="cross"><use href="#xs"/></svg></button>
      <button class="tabbtn on d-flex align-items-center"><svg><use href="#doc"/></svg><span>bending_tool_number_R2.1 : 1</span><svg class="cross"><use href="#xs"/></svg></button>
    </div>
  </section>
</main>

<div class="reporthead d-flex align-items-center"><span class="flex-fill text-center ps-2">レポートビュー</span><button aria-label="重ねる"><svg><use href="#dock"/></svg></button><button aria-label="フロート"><svg><use href="#float"/></svg></button><button aria-label="閉じる"><svg><use href="#close"/></svg></button></div>
<div class="report"></div>
<div class="down report-tabs d-flex align-items-start"><button class="tabbtn on">レポートビュー</button><button class="tabbtn">Pythonコンソール</button></div>
<footer class="status d-flex justify-content-end align-items-center gap-1">
  <button class="box w1" aria-label="進捗"><span class="swatch"></span></button>
  <button class="box w2 ps-2"><svg width="7" height="10" class="me-1"><path d="M3.500 1a3 3 0 0 1 3 3v2a3 3 0 0 1-6 0V4a3 3 0 0 1 3-3zM3.500 2v3" fill="none" stroke="#333"/></svg>Blender</button>
  <button class="box w3">121.47 mm x 51.48 mm</button>
</footer>

<script src="https://cdn.jsdelivr.net/npm/bootstrap@5.3.0/dist/js/bootstrap.bundle.min.js"></script>
<script>
// Ridges of the bending tool, one per slot width from 17 down to 2.
const count = 16;
let ridges = '', sizes = '';
const pts = (x, y, list) => list.map(([a, b]) => (x + a) + ',' + (y + b)).join(' ');
for (let i = count - 1; i >= 0; i--) {
  const tx = 415 + 34 * i, ty = 202, ex = 658 + 19 * i, ey = 406 - 12.53 * i;
  const band = (a, b, c, d, fill, edge = 1.1) =>
    `<polygon fill="${fill}" stroke-width="${edge}" points="${tx + a[0]},${ty + a[1]} ${tx + b[0]},${ty + b[1]} ${ex + c[0]},${ey + c[1]} ${ex + d[0]},${ey + d[1]}"/>`;
  ridges += band([5, -2], [8, -2], [6, -4], [3, -4], '#8f959c');
  ridges += band([-6, 1], [5, -2], [3, -4], [-7, 1], '#8a9096');
  ridges += band([-2, 0], [3, -1], [1, -3], [-3, -1], '#a8adb8', 0);
  ridges += `<path fill="#7c8389" stroke-width="1.100" d="M${tx} 191h3l22 18h-12l-9-9z"/>`;
  ridges += `<path fill="#787f85" stroke="none" d="M${tx + 14} 202h8l7 8h-10z"/>`;
  ridges += `<path fill="#8b9197" stroke-width="1.300" d="M${tx - 7} 202l4-9 4-3 3 2-3 7-6 5z"/>`;
  ridges += `<path fill="none" stroke-width="1" d="M${tx - 5} 200q5 7 9 0"/>`;
  if (i < count - 1) ridges += `<path fill="none" stroke-width="2.200" d="M${tx + 2} 190l14 12 5-2 3 2 4-1"/>`;
}
for (let i = count - 1; i >= 0; i--) {
  const ex = 658 + 19 * i, ey = 406 - 12.53 * i;
  ridges += `<polygon fill="#3d4144" stroke-width="1" points="${pts(ex, ey, [[7, 5], [12, -2], [17, -4], [10, 18], [2, 22]])}"/>`;
  ridges += `<ellipse fill="#858b92" stroke-width="1.100" cx="${ex - 4}" cy="${ey + 28}" rx="7" ry="6"/>`;
  ridges += `<path fill="none" stroke-width="1" d="M${ex - 8} ${ey + 25}q6-2 8 7"/>`;
  ridges += `<polygon fill="#8d939a" stroke-width="1" points="${pts(ex, ey, [[-3, 6], [5, 4], [-2, 23], [-9, 24]])}"/>`;
  ridges += `<path fill="none" stroke-width=".8" d="M${ex + 1} ${ey + 6}l-6 17"/>`;
  ridges += `<polygon fill="#959ba3" stroke-width="1.100" points="${pts(ex, ey, [[-7, 2], [-1, -4], [3, -5], [7, -2], [6, 4], [0, 6], [-6, 5]])}"/>`;
  ridges += `<path fill="none" stroke-width=".8" d="M${ex - 1} ${ey - 5}q4 4 2 11M${ex + 7} ${ey - 2}l6-4 5-1"/>`;
  ridges += `<circle cx="${ex - 2}" cy="${ey + 1}" r="2" fill="#ccd0d8" stroke="none"/>`;
  sizes += `<text transform="translate(${670 + 19 * i} ${450 - 12.53 * i}) rotate(-34)">${17 - i}</text>`;
}
document.getElementById('ridges').innerHTML = ridges;
document.getElementById('sizes').innerHTML = sizes;
</script>
</body>
</html>
